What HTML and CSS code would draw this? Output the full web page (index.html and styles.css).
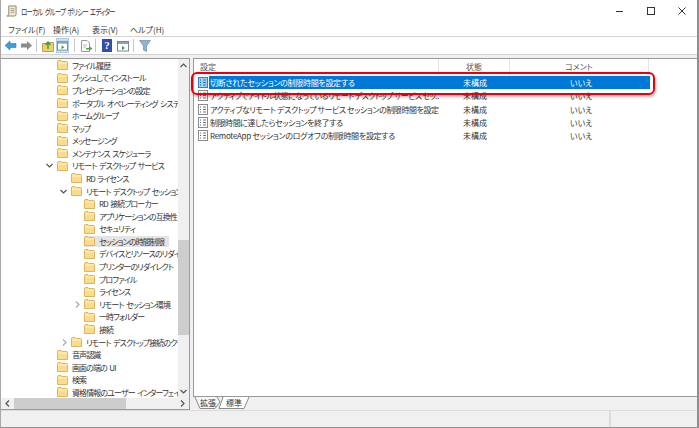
FILE: index.html
```html
<!DOCTYPE html>
<html>

	<head>
		<meta charset="UTF-8">
		<title>ローカル グループ ポリシー エディター</title>
		<link rel="stylesheet" href="styles.css">
	</head>

	<body>
		<svg class="defs" width="0" height="0">
			<symbol id="folder" viewBox="0 0 11 10">
				<path d="M.5 9.5V1.5Q.5.5 1.5.5H4L5 1.5H9.5Q10.5 1.5 10.5 2.5V9.5Z" fill="#fbdc8c" stroke="#d9b65f"/>
				<path d="M1 3H10" stroke="#fff3c8"/>
			</symbol>
			<symbol id="policy" viewBox="0 0 10 11">
				<rect x=".5" y=".5" width="9" height="10" fill="#fff" stroke="#8a8a8a"/>
				<path d="M2 3H3M2 5.5H3M2 8H3" stroke="#3a6ea5"/>
				<path d="M5 3H8M5 5.5H8M5 8H8" stroke="#777"/>
			</symbol>
			<symbol id="policy-on" viewBox="0 0 10 11">
				<rect x=".5" y=".5" width="9" height="10" fill="#a6d0f2" stroke="#2f7fc4"/>
				<path d="M2 3H3M2 5.5H3M2 8H3" stroke="#0b5fa8"/>
				<path d="M5 3H8M5 5.5H8M5 8H8" stroke="#2c75b5"/>
			</symbol>
			<symbol id="chev-down" viewBox="0 0 7 5">
				<path d="M.5 1L3.5 4L6.5 1" fill="none" stroke="#555" stroke-width="1.2"/>
			</symbol>
			<symbol id="chev-right" viewBox="0 0 5 7">
				<path d="M1 .5L4 3.5L1 6.5" fill="none" stroke="#aaa" stroke-width="1.2"/>
			</symbol>
			<symbol id="chev-dark" viewBox="0 0 5 7">
				<path d="M1 .5L4 3.5L1 6.5" fill="none" stroke="#555" stroke-width="1.2"/>
			</symbol>
		</svg>

		<div class="window">
			<header class="titlebar">
				<svg class="app-icon" width="11" height="12" viewBox="0 0 12 13">
					<path d="M3 1H11V10Q11 12 9 12H1Q3 12 3 10Z" fill="#efe9d2" stroke="#8a8366"/>
					<path d="M5 4H9M5 6H9M5 8H9" stroke="#a59c7c"/>
				</svg>
				<span class="title">ローカル グループ ポリシー エディター</span>
				<div class="controls">
					<svg width="10" height="10" viewBox="0 0 10 10"><path d="M1 5.5H8" stroke="#333"/></svg>
					<svg width="10" height="10" viewBox="0 0 10 10"><rect x="1.5" y="1.5" width="7" height="7" fill="none" stroke="#333"/></svg>
					<svg width="10" height="10" viewBox="0 0 10 10"><path d="M1.5 1.5L8.5 8.5M8.5 1.5L1.5 8.5" stroke="#333"/></svg>
				</div>
			</header>

			<nav class="menubar">
				<span>ファイル(F)</span>
				<span>操作(A)</span>
				<span>表示(V)</span>
				<span>ヘルプ(H)</span>
			</nav>

			<div class="toolbar">
				<svg class="t-back" width="13" height="11" viewBox="0 0 13 11"><path d="M6 1L1 5.5L6 10V7.5H12V3.5H6Z" fill="#3d9be0" stroke="#2a78b8" stroke-width=".6"/></svg>
				<svg class="t-next" width="13" height="11" viewBox="0 0 13 11"><path d="M7 1L12 5.5L7 10V7.5H1V3.5H7Z" fill="#8c8c8c"/></svg>
				<i class="sep t-s1"></i>
				<svg class="t-up" width="12" height="12" viewBox="0 0 12 12"><path d="M.5 11.5V3.5H4L5 2.5H11.5V11.5Z" fill="#f2cf6e" stroke="#c2a04b"/><path d="M6 9V3M3.5 5L6 2L8.5 5" fill="none" stroke="#3f9b3a" stroke-width="1.4"/></svg>
				<span class="tool-on t-tree">
					<svg width="11" height="11" viewBox="0 0 12 12"><rect x=".5" y="1.5" width="11" height="9.5" fill="#fff" stroke="#7b8794"/><rect x="1" y="2" width="10" height="2" fill="#8fa3b5"/><path d="M5 6V10L8 8Z" fill="#3f9b3a"/></svg>
				</span>
				<i class="sep t-s2"></i>
				<svg class="t-doc" width="13" height="12" viewBox="0 0 13 12"><path d="M1.5 .5H7L9.5 3V11.5H1.5Z" fill="#fff" stroke="#999"/><path d="M3 5H7M3 7H6" stroke="#bbb"/><path d="M6 8H9V6L12.5 8.5L9 11V9.5H6Z" fill="#4da83f"/></svg>
				<i class="sep t-s3"></i>
				<span class="help-icon t-help">?</span>
				<svg class="t-pane" width="12" height="12" viewBox="0 0 12 12"><rect x=".5" y="1.5" width="11" height="9.5" fill="#fff" stroke="#7b8794"/><rect x="1" y="2" width="10" height="2" fill="#8fa3b5"/><path d="M5 6V10L8 8Z" fill="#3f9b3a"/></svg>
				<i class="sep t-s4"></i>
				<svg class="t-filter" width="12" height="12" viewBox="0 0 12 12"><path d="M.5 .5H11.5L7.5 6V11.5L4.5 10V6Z" fill="#8fb4cf" stroke="#6d8ea8" stroke-width=".7"/></svg>
			</div>

			<div class="main">
				<aside class="tree-pane">
					<div class="tree-body">
						<ul class="tree">
							<li class="lv0"><svg class="fld"><use href="#folder"/></svg>ファイル履歴</li>
							<li class="lv0"><svg class="fld"><use href="#folder"/></svg>プッシュしてインストール</li>
							<li class="lv0"><svg class="fld"><use href="#folder"/></svg>プレゼンテーションの設定</li>
							<li class="lv0"><svg class="fld"><use href="#folder"/></svg>ポータブル オペレーティング システム</li>
							<li class="lv0"><svg class="fld"><use href="#folder"/></svg>ホームグループ</li>
							<li class="lv0"><svg class="fld"><use href="#folder"/></svg>マップ</li>
							<li class="lv0"><svg class="fld"><use href="#folder"/></svg>メッセージング</li>
							<li class="lv0"><svg class="fld"><use href="#folder"/></svg>メンテナンス スケジューラ</li>
							<li class="lv0"><svg class="chv"><use href="#chev-down"/></svg><svg class="fld"><use href="#folder"/></svg>リモート デスクトップ サービス</li>
							<li class="lv1"><svg class="fld"><use href="#folder"/></svg>RD ライセンス</li>
							<li class="lv1"><svg class="chv"><use href="#chev-down"/></svg><svg class="fld"><use href="#folder"/></svg>リモート デスクトップ セッション ホスト</li>
							<li class="lv2"><svg class="fld"><use href="#folder"/></svg>RD 接続ブローカー</li>
							<li class="lv2"><svg class="fld"><use href="#folder"/></svg>アプリケーションの互換性</li>
							<li class="lv2"><svg class="fld"><use href="#folder"/></svg>セキュリティ</li>
							<li class="lv2"><span class="picked"><svg class="fld"><use href="#folder"/></svg>セッションの時間制限</span></li>
							<li class="lv2"><svg class="fld"><use href="#folder"/></svg>デバイスとリソースのリダイレクト</li>
							<li class="lv2"><svg class="fld"><use href="#folder"/></svg>プリンターのリダイレクト</li>
							<li class="lv2"><svg class="fld"><use href="#folder"/></svg>プロファイル</li>
							<li class="lv2"><svg class="fld"><use href="#folder"/></svg>ライセンス</li>
							<li class="lv2"><svg class="chr"><use href="#chev-right"/></svg><svg class="fld"><use href="#folder"/></svg>リモート セッション環境</li>
							<li class="lv2"><svg class="fld"><use href="#folder"/></svg>一時フォルダー</li>
							<li class="lv2"><svg class="fld"><use href="#folder"/></svg>接続</li>
							<li class="lv1"><svg class="chr"><use href="#chev-right"/></svg><svg class="fld"><use href="#folder"/></svg>リモート デスクトップ接続のクライアント</li>
							<li class="lv0"><svg class="fld"><use href="#folder"/></svg>音声認識</li>
							<li class="lv0"><svg class="fld"><use href="#folder"/></svg>画面の端の UI</li>
							<li class="lv0"><svg class="fld"><use href="#folder"/></svg>検索</li>
							<li class="lv0"><svg class="fld"><use href="#folder"/></svg>資格情報のユーザー インターフェイス</li>
						</ul>
						<div class="vscroll">
							<svg class="up" width="7" height="5"><use href="#chev-down"/></svg>
							<div class="vtrack"><i class="vthumb"></i></div>
							<svg width="7" height="5"><use href="#chev-down"/></svg>
						</div>
					</div>
					<div class="hscroll">
						<svg class="left" width="5" height="7"><use href="#chev-dark"/></svg>
						<div class="htrack"><i class="hthumb"></i></div>
						<svg width="5" height="7"><use href="#chev-dark"/></svg>
					</div>
				</aside>

				<section class="right-pane">
					<div class="list">
						<div class="list-head">
							<span class="col-name">設定</span>
							<span class="col-state">状態</span>
							<span class="col-note">コメント</span>
						</div>
						<div class="row selected">
							<svg class="pol"><use href="#policy-on"/></svg>
							<span class="col-name loose">切断されたセッションの制限時間を設定する</span>
							<span class="col-state">未構成</span>
							<span class="col-note">いいえ</span>
						</div>
						<div class="row">
							<svg class="pol"><use href="#policy"/></svg>
							<span class="col-name tight">アクティブでアイドル状態になっているリモート デスクトップ サービス セッ...</span>
							<span class="col-state">未構成</span>
							<span class="col-note">いいえ</span>
						</div>
						<div class="row">
							<svg class="pol"><use href="#policy"/></svg>
							<span class="col-name">アクティブなリモート デスクトップ サービス セッションの制限時間を設定...</span>
							<span class="col-state">未構成</span>
							<span class="col-note">いいえ</span>
						</div>
						<div class="row">
							<svg class="pol"><use href="#policy"/></svg>
							<span class="col-name">制限時間に達したらセッションを終了する</span>
							<span class="col-state">未構成</span>
							<span class="col-note">いいえ</span>
						</div>
						<div class="row">
							<svg class="pol"><use href="#policy"/></svg>
							<span class="col-name loose">RemoteApp セッションのログオフの制限時間を設定する</span>
							<span class="col-state">未構成</span>
							<span class="col-note">いいえ</span>
						</div>
						<div class="callout"></div>
					</div>
					<div class="tabs">
						<svg class="tab-shape" width="60" height="13" viewBox="0 0 60 13">
							<path d="M2 0L7 11.5H22L27 5L24 0" fill="#f7f7f7" stroke="#8a8a8a"/>
							<path d="M30 0L26 11.5H51L56 0" fill="#fff" stroke="#8a8a8a"/>
						</svg>
						<span class="tab tab-ext">拡張</span>
						<span class="tab tab-std">標準</span>
					</div>
				</section>
			</div>

			<footer class="statusbar">
				<i></i><i></i>
			</footer>
		</div>
	</body>

</html>
```

FILE: styles.css
```css
* {
	margin: 0;
	padding: 0;
	box-sizing: border-box;
	list-style: none;
}

html,
body {
	width: 699px;
	height: 428px;
	overflow: hidden;
	background: #fff;
}

body {
	font-family: "Noto Sans CJK JP", "Liberation Sans", sans-serif;
	font-size: 8px;
	font-feature-settings: "palt";
	color: #333;
}

.defs {
	position: absolute;
}

.window {
	width: 699px;
	height: 428px;
	display: flex;
	flex-direction: column;
	background: #f0f0f0;
	border-right: 2px solid #8f8f8f;
	border-bottom: 1px solid #8f8f8f;
	border-left: 1px solid #a8a8a8;
}

/* タイトルバー */
.titlebar {
	height: 22px;
	flex: none;
	display: flex;
	align-items: center;
	padding-left: 5px;
	background: #fff;
}

.title {
	margin-left: 4px;
	font-size: 8.5px;
	letter-spacing: -.9px;
	word-spacing: 1.5px;
	transform: scaleX(.75);
	transform-origin: left center;
}

.controls {
	margin-left: auto;
	display: flex;
	gap: 21px;
	padding-right: 10px;
}

.menubar {
	height: 15px;
	flex: none;
	display: grid;
	grid-template-columns: 45px 39px 38px auto;
	align-items: center;
	padding-left: 7px;
	background: #fff;
	border-bottom: 1px solid #d4d4d4;
}

.toolbar {
	height: 18px;
	flex: none;
	display: flex;
	align-items: center;
	padding-left: 3px;
	background: #fff;
	border-bottom: 1px solid #d4d4d4;
}

.toolbar .sep {
	width: 1px;
	height: 13px;
	background: #c8c8c8;
}

.t-next {
	margin-left: 3px;
}

.t-s1 {
	margin-left: 3px;
}

.t-up {
	margin-left: 5px;
}

.t-tree {
	margin-left: 2px;
}

.t-s2 {
	margin-left: 5px;
}

.t-doc {
	margin-left: 5px;
}

.t-s3 {
	margin-left: 2px;
}

.t-help {
	margin-left: 6px;
}

.t-pane {
	margin-left: 5px;
}

.t-s4 {
	margin-left: 4px;
}

.t-filter {
	margin-left: 5px;
}

.tool-on {
	width: 13px;
	height: 15px;
	display: flex;
	align-items: center;
	justify-content: center;
	background: #cfe4f5;
	border: 1px solid #a9cde8;
}

.help-icon {
	width: 10px;
	height: 13px;
	line-height: 13px;
	text-align: center;
	font-family: "Liberation Serif", serif;
	font-size: 11px;
	font-weight: bold;
	color: #fff;
	background: #2f4fa8;
}

.main {
	flex: 1;
	min-height: 0;
	display: flex;
	gap: 3px;
	padding-top: 3px;
}

/* 左のツリー */
.tree-pane {
	width: 189px;
	display: flex;
	flex-direction: column;
	background: #fff;
	border: 1px solid #9a9a9a;
	border-left: 0;
}

.tree-body {
	flex: 1;
	min-height: 0;
	display: flex;
}

.tree {
	width: 177px;
	overflow: hidden;
	letter-spacing: -.9px;
	word-spacing: 1.5px;
}

.tree li {
	height: 12.58px;
	display: flex;
	align-items: center;
	white-space: nowrap;
	position: relative;
}

.lv0 {
	padding-left: 56px;
}

.lv1 {
	padding-left: 70px;
}

.lv2 {
	padding-left: 83px;
}

.fld {
	width: 11px;
	height: 10px;
	margin-right: 4px;
	flex: none;
}

.chv {
	position: absolute;
	width: 7px;
	height: 5px;
	margin-left: -11px;
}

.chr {
	position: absolute;
	width: 5px;
	height: 7px;
	margin-left: -9px;
}

.picked {
	display: flex;
	align-items: center;
	height: 11px;
	padding-right: 5px;
	background: #e4e4e4;
}

.vscroll {
	width: 11px;
	display: flex;
	flex-direction: column;
	align-items: center;
	gap: 4px;
	padding: 4px 0;
	background: #f0f0f0;
}

.vscroll .up {
	transform: rotate(180deg);
}

.vtrack {
	flex: 1;
	width: 100%;
	padding-top: 168px;
	padding-bottom: 50px;
	display: flex;
}

.vthumb {
	flex: 1;
	background: #cdcdcd;
}

.hscroll {
	height: 11px;
	flex: none;
	display: flex;
	align-items: center;
	gap: 4px;
	padding: 0 4px;
	background: #f0f0f0;
}

.hscroll .left {
	transform: rotate(180deg);
}

.htrack {
	flex: 1;
	height: 100%;
}

.hthumb {
	display: block;
	width: 112px;
	height: 100%;
	background: #cdcdcd;
}

/* 右の一覧 */
.right-pane {
	flex: 1;
	min-width: 0;
	display: flex;
	flex-direction: column;
}

.list {
	flex: 1;
	position: relative;
	background: #fff;
	border: 1px solid #9a9a9a;
	border-right: 0;
	padding-left: 2px;
}

.list-head {
	height: 17px;
	display: grid;
	grid-template-columns: 243px 71px 139px;
	align-items: stretch;
	color: #555;
}

.list-head span {
	line-height: 16px;
	border-right: 1px solid #e4e4e4;
	border-bottom: 1px solid #efefef;
}

.list-head .col-name {
	padding-left: 4px;
}

.list-head .col-state,
.list-head .col-note {
	text-align: center;
}

.row {
	height: 13.3px;
	display: grid;
	grid-template-columns: 13px 230px 71px 140px;
	align-items: stretch;
	line-height: 13.3px;
	white-space: nowrap;
}

.row .pol {
	width: 10px;
	height: 11px;
	margin: 1px 0 0 2px;
}

.row .col-name {
	overflow: hidden;
	padding-left: 1px;
	letter-spacing: -.45px;
}

.row .col-name.loose {
	letter-spacing: -.3px;
}

.row .col-name.tight {
	letter-spacing: -.62px;
}

.row .col-state {
	padding-left: 24px;
}

.row .col-note {
	padding-left: 60px;
}

.row.selected span {
	color: #fff;
	background: #0078d7;
}

.callout {
	position: absolute;
	left: -3px;
	top: 13px;
	width: 464px;
	height: 23px;
	border: 2.5px solid #e60012;
	border-radius: 6px;
	box-shadow: 1px 2px 3px rgba(0, 0, 0, .3);
}

.tabs {
	height: 13px;
	flex: none;
	position: relative;
	display: flex;
	padding-left: 7px;
	background: #f0f0f0;
}

.tab-shape {
	position: absolute;
	left: 0;
	top: 0;
}

.tab {
	position: relative;
	line-height: 11px;
}

.tab-std {
	margin-left: 10px;
}

.statusbar {
	height: 17px;
	flex: none;
	display: grid;
	grid-template-columns: 1fr 88px;
	border-top: 1px solid #dcdcdc;
	background: #f0f0f0;
}

.statusbar i:last-child {
	border-left: 2px solid #dcdcdc;
}
```
